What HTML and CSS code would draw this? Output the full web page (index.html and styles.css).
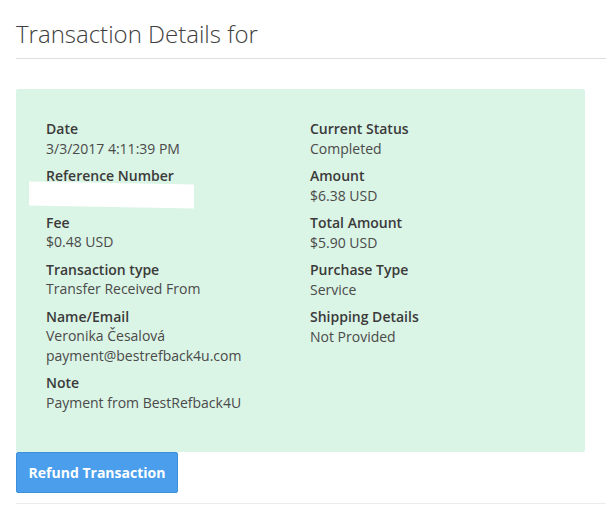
FILE: index.html
```html
<!DOCTYPE html>
<html>
<head>
<meta charset="utf-8">
<link rel="stylesheet" href="styles.css">
</head>
<body>
<div class="page">
  <h1 class="title">Transaction Details for</h1>
  <div class="details">
    <div class="col">
      <div class="item"><div class="label">Date</div><div class="value">3/3/2017 4:11:39 PM</div></div>
      <div class="item"><div class="label">Reference Number</div><div class="value"><span class="redact"></span></div></div>
      <div class="item"><div class="label">Fee</div><div class="value">$0.48 USD</div></div>
      <div class="item"><div class="label">Transaction type</div><div class="value">Transfer Received From</div></div>
      <div class="item"><div class="label">Name/Email</div><div class="value">Veronika Česalová</div><div class="value">payment@bestrefback4u.com</div></div>
      <div class="item"><div class="label">Note</div><div class="value">Payment from BestRefback4U</div></div>
    </div>
    <div class="col">
      <div class="item"><div class="label">Current Status</div><div class="value">Completed</div></div>
      <div class="item"><div class="label">Amount</div><div class="value">$6.38 USD</div></div>
      <div class="item"><div class="label">Total Amount</div><div class="value">$5.90 USD</div></div>
      <div class="item"><div class="label">Purchase Type</div><div class="value">Service</div></div>
      <div class="item"><div class="label">Shipping Details</div><div class="value">Not Provided</div></div>
    </div>
  </div>
  <button class="refund">Refund Transaction</button>
  <div class="footer-line"></div>
</div>
</body>
</html>
```
FILE: styles.css
```css
html, body {
  margin: 0;
  padding: 0;
  background: #fff;
}
body {
  font-family: "Open Sans", "DejaVu Sans", sans-serif;
  color: #444;
}
.page {
  padding: 17px 0 0 16px;
}
.title {
  margin: 0;
  font-weight: 300;
  font-size: 24px;
  line-height: 34px;
  color: #3e3e3e;
  padding-bottom: 7px;
  border-bottom: 1px solid #dedede;
}
.details {
  margin-top: 30px;
  width: 569px;
  box-sizing: border-box;
  background: #daf4e5;
  border-radius: 2px;
  padding: 30px 0 32px 30px;
  display: grid;
  grid-template-columns: 264px 1fr;
  font-size: 14px;
  line-height: 19.5px;
}
.item {
  margin-bottom: 8px;
}
.label {
  font-weight: 600;
  color: #3a3a3a;
}
.value {
  color: #4a4a4a;
}
.redact {
  display: block;
  width: 165px;
  height: 24px;
  margin: -3px 0 -2px -17px;
  background: #fff;
  transform: skewY(1deg);
}
.refund {
  display: block;
  margin: 0;
  width: 162px;
  height: 41px;
  border: 1px solid #3f8fdb;
  border-radius: 2px;
  background: #4a9eec;
  color: #fff;
  font-family: "Open Sans", "DejaVu Sans", sans-serif;
  font-weight: 700;
  font-size: 14px;
  padding: 0;
}
.footer-line {
  margin-top: 10px;
  border-top: 1px solid #ececec;
}
```
